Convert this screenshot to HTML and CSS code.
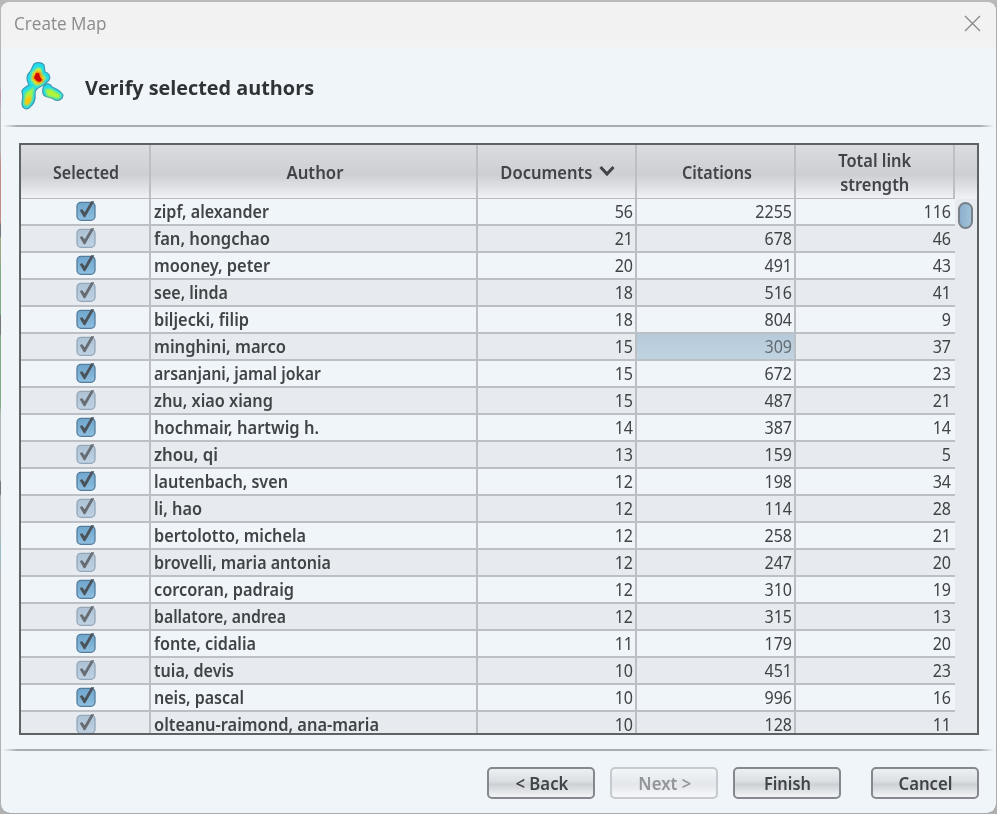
FILE: index.html
```html
<!DOCTYPE html>
<html lang="en">
<head>
<meta charset="utf-8">
<title>Create Map</title>
<link rel="stylesheet" href="styles.css">
</head>
<body>
<svg class="defs" width="0" height="0">
  <defs>
    <linearGradient id="on" x1="0" y1="0" x2="0" y2="1"><stop offset="0" stop-color="#6ea5cc"/><stop offset="1" stop-color="#8dbfdf"/></linearGradient>
    <linearGradient id="off" x1="0" y1="0" x2="0" y2="1"><stop offset="0" stop-color="#adc2d6"/><stop offset="1" stop-color="#bfd2e3"/></linearGradient>
    <path id="tick" d="M4.800 10.300L7 9L9.700 12.200L16.200 1.300L19.300 1.300L10.200 17.200L8.800 17.200Z"/>
    <filter id="soft" x="-30%" y="-30%" width="160%" height="160%"><feGaussianBlur stdDeviation="1"/></filter>
  </defs>
</svg>
<div class="window">
  <div class="titlebar">
    <span class="caption">Create Map</span>
    <svg class="close" width="17" height="17" viewBox="0 0 17 17"><path d="M1 1L16 16M16 1L1 16"/></svg>
  </div>
  <div class="heading">
    <svg class="logo" width="46" height="50" viewBox="0 0 46 50">
      <path d="M14 3C16 1 22 1 24 4L25 11C29 12 31 16 29 19C27 21 25 23 24 24C19 26 15 28 15 32C16 39 13 44 9 47C6 49 2 47 2 43C2 38 4 35 2 31C1 28 6 26 9 24C7 20 6 15 9 12C12 9 12 6 14 3Z" fill="#20dcee" stroke="#3c97af" stroke-width="1.2"/>
      <path d="M24 25C26 22 30 22 32 26C36 28 40 29 43 34C43 38 39 40 35 39C32 36 28 37 25 35C22 33 22 28 24 25Z" fill="#20dcee" stroke="#3c97af" stroke-width="1.2"/>
      <g filter="url(#soft)">
        <path d="M17 7L21 7L22 13L26 17L22 23L16 25L11 19L12 12Z" fill="#d9f52c"/>
        <path d="M16 10L20 10L24 20L18 23L12 17Z" fill="#ff7a00"/>
        <path d="M5 32L14 26L12 39L8 45L4 44Z" fill="#a9f43e"/>
        <ellipse cx="8" cy="39.5" rx="3" ry="5" transform="rotate(25 8 39.5)" fill="#ffc400"/>
        <path d="M25 28L31 28L41 34L39 38L27 35Z" fill="#b4f534"/>
      </g>
      <path d="M16 12L19 12L20 16L22 19L20 21L17 20L14 17Z" fill="#cf0700"/>
    </svg>
    <h1>Verify selected authors</h1>
  </div>
  <div class="rule"></div>
  <div class="main">
    <div class="table">
      <div class="row head">
        <div><span>Selected</span></div><div><span>Author</span></div>
        <div><span>Documents</span><svg class="sort" width="16" height="12" viewBox="0 0 16 12"><path d="M1.500 2L8 9L14.500 2"/></svg></div>
        <div><span>Citations</span></div><div><span>Total link<br>strength</span></div><div></div>
      </div>
      <div class="body">
        <div class="rows" id="rows"></div>
        <div class="track"><div class="thumb"></div></div>
      </div>
    </div>
  </div>
  <div class="rule"></div>
  <div class="footer">
    <button><span>&lt; Back</span></button>
    <button class="disabled"><span>Next &gt;</span></button>
    <button><span>Finish</span></button>
    <button class="cancel"><span>Cancel</span></button>
  </div>
</div>
<script src="rows.js"></script>
</body>
</html>
```
FILE: styles.css
```css
* { box-sizing: border-box; }
body {
  margin: 0; width: 997px; height: 814px; overflow: hidden; padding: 0;
  font-family: "Noto Sans", "Open Sans", sans-serif; color: #414447;
  background: linear-gradient(#b8b8b8 0 85px, #c06aa0 95px, #b8b8b8 110px 150px, #cc6868 165px 222px, #444 225px 236px, #8a9a5e 238px 260px, #58a05e 270px 314px, #444 316px 334px, #58a05e 336px 405px, #b5b8b5 415px 480px, #444 482px 494px, #b5b5b5 496px 530px, #8fbcc8 545px 560px, #b0b0b0 575px);
}
.defs { position: absolute; }
.window {
  width: 997px; height: 814px; border: 1px solid #a9abad; border-top: 2px solid #bababa; border-left-color: rgba(180,183,184,.45);
  border-radius: 10px; background: #f0f5fa; background-clip: padding-box; overflow: hidden;
  display: flex; flex-direction: column;
}
.titlebar {
  height: 45px; flex: none; background: #f2f2f2; padding: 0 15px 3px 13px;
  display: flex; justify-content: space-between; align-items: center;
}
.caption { font: 17.5px/24px "Open Sans", sans-serif; color: #8b8b8b; }
.close { fill: none; stroke: #858585; stroke-width: 1.2; }
.heading { height: 78px; flex: none; display: flex; align-items: center; padding: 3px 0 0 19px; gap: 19px; }
.logo { margin-top: -3px; }
h1 { margin: 0; font: bold 19.500px/28px "Open Sans", sans-serif; color: #303336; }
.rule { height: 2px; flex: none; margin: 0 2px; background: linear-gradient(90deg, transparent, #a8adb2 14px, #a8adb2 calc(100% - 14px), transparent); }
.main { height: 622px; flex: none; padding: 16px 0 0 18px; }
.table { width: 960px; height: 592px; border: 2px solid #5f6265; overflow: hidden; }
.row { display: grid; grid-template-columns: 130px 327px 159px 159px 159px; }
.head { grid-template-columns: 130px 327px 159px 159px 159px 22px; height: 54px; background: linear-gradient(#dadce0, #cdcfd3 54%, #d2d4d8 62%, #eff1f5 98%); }
.head > div {
  display: flex; align-items: center; justify-content: center; text-align: center; gap: 6px; padding: 2px 0 0 2px;
  border-right: 2px solid #bcbfc3; border-bottom: 1px solid #b6b9be; font-size: 17px; font-weight: 600; line-height: 24px;
}
.head > div:nth-child(5) { padding-left: 0; }
.head > div:last-child { border: 0; }
.head span, .name span, button span { display: inline-block; }
.sort { fill: none; stroke: #414447; stroke-width: 3; margin: -4px 1px 0 -1px; }
.body { display: flex; }
.rows { width: 934px; }
.rows .row { height: 27px; }
.rows .row:nth-child(even) { background: #e7ebef; }
.rows .row > div {
  border-right: 2px solid #bcbfc3; border-bottom: 2px solid #bcbfc3; height: 27px;
  font-size: 17.500px; line-height: 25px; text-align: right; padding-right: 2px; white-space: nowrap;
}
.rows .row > div:last-child { border-right: 0; padding-right: 4px; }
.rows .row .name { text-align: left; padding-left: 3px; font-size: 17px; line-height: 26px; font-weight: 600; }
.rows .row .check { text-align: center; padding: 0 0 0 2px; }
.check svg { display: block; margin: 1px auto 0; }
.rows .row .active { background: linear-gradient(#b6cada, #bfd3e1); color: #656c72; }
.track { width: 22px; background: #e7ebef; padding: 3px 0 0 3px; }
.thumb { width: 15px; height: 27px; border-radius: 8px; border: 2px solid #788088; background: linear-gradient(90deg, #8cb0ce, #a1c2d8); }
.footer { flex: 1; display: flex; justify-content: flex-end; padding: 16px 17px 0 0; gap: 15px; }
button {
  width: 108px; height: 32px; border: 2px solid #85888e; border-radius: 5px; padding: 2px 0 0 1px;
  background: linear-gradient(#edf0f3, #dcdfe3 42%, #cdd0d5 55%, #eef0f3 95%);
  font: 600 17px/24px "Noto Sans", "Open Sans", sans-serif; color: #414447;
}
.disabled { border-color: #c6c9cd; color: #929598; background: linear-gradient(#f3f6f9, #e3e6ea 55%, #f4f6f9 95%); }
.cancel { margin-left: 15px; }
```
FILE: rows.js
```js
const data = [
  ["zipf, alexander", 56, 2255, 116, 115], ["fan, hongchao", 21, 678, 46, 116], ["mooney, peter", 20, 491, 43, 116],
  ["see, linda", 18, 516, 41, 74], ["biljecki, filip", 18, 804, 9, 95], ["minghini, marco", 15, 309, 37, 132],
  ["arsanjani, jamal jokar", 15, 672, 23, 167], ["zhu, xiao xiang", 15, 487, 21, 119], ["hochmair, hartwig h.", 14, 387, 14, 165],
  ["zhou, qi", 13, 159, 5, 64], ["lautenbach, sven", 12, 198, 34, 134], ["li, hao", 12, 114, 28, 48],
  ["bertolotto, michela", 12, 258, 21, 152], ["brovelli, maria antonia", 12, 247, 20, 177], ["corcoran, padraig", 12, 310, 19, 140],
  ["ballatore, andrea", 12, 315, 13, 132], ["fonte, cidalia", 11, 179, 20, 102], ["tuia, devis", 10, 451, 23, 80],
  ["neis, pascal", 10, 996, 16, 90], ["olteanu-raimond, ana-maria", 10, 128, 11, 225]
];

// Condenses a label horizontally to the given width.
function fit(el, width, origin) {
  const natural = el.getBoundingClientRect().width;
  el.style.display = "inline-block";
  el.style.transformOrigin = origin;
  el.style.transform = `scaleX(${width / natural})`;
}

document.getElementById("rows").innerHTML = data.map(([name, docs, cites, links], i) => {
  const odd = i % 2;
  return `<div class="row"><div class="check"><svg width="22" height="22" viewBox="0 0 22 22">
    <rect x="2" y="2.300" width="18" height="18" rx="4" fill="url(#${odd ? "off" : "on"})" stroke="${odd ? "#94a7b9" : "#557d9b"}" stroke-width="1.3"/>
    <use href="#tick" fill="${odd ? "#686d73" : "#4b535b"}"/></svg></div>
    <div class="name"><span>${name}</span></div><div><span class="num">${docs}</span></div>
    <div class="${i === 5 ? "active" : ""}"><span class="num">${cites}</span></div><div><span class="num">${links}</span></div></div>`;
}).join("");

document.querySelectorAll(".name span").forEach((el, i) => fit(el, data[i][4], "left"));
document.querySelectorAll(".num").forEach(el => fit(el, el.textContent.length * 9.2, "right"));
const heads = [66, 57, 92, 70, 73];
document.querySelectorAll(".head span").forEach((el, i) => fit(el, heads[i], "center"));
const labels = [53, 53, 47, 54];
document.querySelectorAll("button span").forEach((el, i) => fit(el, labels[i], "center"));
fit(document.querySelector(".caption"), 92.5, "left");
fit(document.querySelector("h1"), 229, "left");
```
